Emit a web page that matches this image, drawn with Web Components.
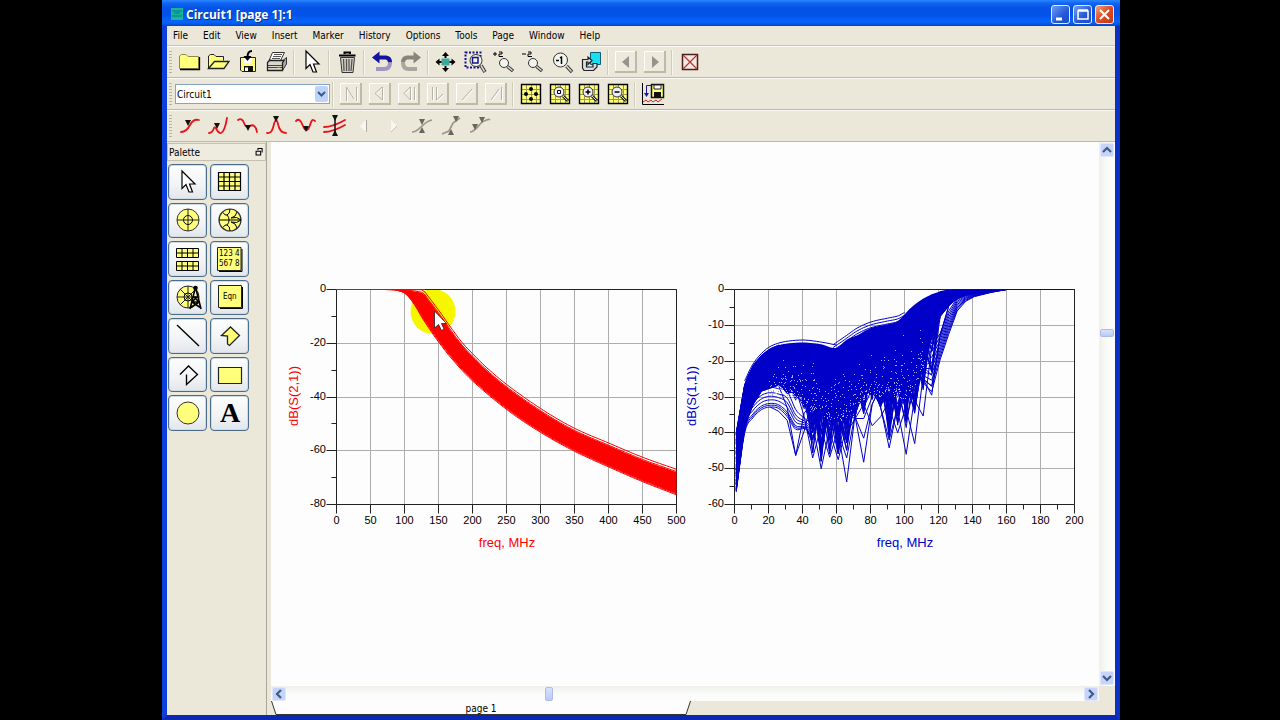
<!DOCTYPE html>
<html lang="en">
<head>
<meta charset="utf-8">
<title>Circuit1 [page 1]:1</title>
<style>
html,body{margin:0;height:100%;background:#000}
body{font:10px "DejaVu Sans Condensed","DejaVu Sans",sans-serif;color:#000}
</style>
</head>
<body>
<app-window></app-window>
<script>
const define = (name, html, setup) => {
  const t = document.createElement('template');
  t.innerHTML = html;
  customElements.define(name, class extends HTMLElement {
    connectedCallback() {
      if (this.shadowRoot) return;
      this.attachShadow({mode: 'open'}).append(t.content.cloneNode(true));
      if (setup) setup.call(this, this.shadowRoot);
    }
  });
};

/* ---------- icons: 24 x 24 grid ---------- */
const S = 'stroke="#000" fill="none"';
const Y = '#ffff7b';
const arrow = '<path d="M6 1V18.5L10 14.5 13 22H16.5L13.5 14H19Z" fill="#fff" stroke="#000" stroke-width="1.2"/>';
const raised = '<path d="M1.500 1.500H22.500V22.500H1.500Z" fill="#ece9dd" stroke="#fff"/><path d="M22 1V22H1" stroke="#bdbaaa" stroke-width="2" fill="none"/>';
const dim = d => `${raised}<path d="${d}" fill="none" stroke="#fff" transform="translate(1 1)"/><path d="${d}" fill="none" stroke="#b7b4a5"/>`;
const grid20 = `<path d="M2.500 2.500H21.500V21.500H2.500Z" fill="${Y}"/><path d="M7.500 2V21M12.500 2V21M17.500 2V21M2 7.500H21M2 12.500H21M2 17.500H21" stroke="#9a9a4a" fill="none"/><path d="M2.500 2.500H21.500V21.500H2.500Z" ${S} stroke-width="1.400"/>`;
const lensSmall = s => `${grid20}<circle cx="11" cy="10" r="5" fill="#eef" stroke="#333"/><path d="M15 14L20 19" stroke="#222" stroke-width="3"/><path d="M15 14L19.500 18.500" stroke="#ddd"/>${s}`;
const lens = (x, y, r, e) => `<path d="M${x + r - 1} ${y + r - 1}L${e} ${e}" stroke="#333" stroke-width="3.400"/><path d="M${x + r - 1} ${y + r - 1}L${e - .5} ${e - .5}" stroke="#ddd" stroke-width="1.500"/><circle cx="${x}" cy="${y}" r="${r}" fill="#f4f4ef" stroke="#333"/>`;
const red = d => `<path d="${d}" fill="none" stroke="#e8141c" stroke-width="1.800" stroke-linecap="round" stroke-linejoin="round"/>`;
const gray = d => `<path d="${d}" fill="none" stroke="#9a978b" stroke-width="1.700"/>`;
const tri = (x, y, c = '#111') => `<path d="M${x - 3} ${y}H${x + 3}L${x} ${y + 6}Z" fill="${c}"/>`;
const triUp = (x, y, c = '#111') => `<path d="M${x - 3} ${y}H${x + 3}L${x} ${y - 6}Z" fill="${c}"/>`;

const ICONS = {
  folder: `<path d="M1.500 18.500V6L3.500 4.500H8L10 6.500H20.500V18.500Z" fill="${Y}" stroke="#8a8a50"/><path d="M21.500 7V19.500H2" ${S} stroke-width="1.300"/>`,
  open: `<path d="M1.500 18.500V6L3.500 4.500H7L9 6.500H16.500V10.500" fill="${Y}" stroke="#222"/><path d="M1.500 18.500L7.500 11.500H22L17 18.500Z" fill="${Y}" stroke="#222" stroke-width="1.300"/>`,
  save: `<path d="M4.500 7.500H19.500V21.500H6L4.500 20Z" fill="${Y}" stroke="#222"/><path d="M8 8H16V13H8Z" fill="#fff"/><path d="M8 16H17V22H8Z" fill="#111"/><path d="M9 17.500H12V21H9Z" fill="#fff"/><path d="M16 1C12 1 11.500 4 11.500 7" ${S} stroke-width="2"/><path d="M7.500 6H15.500L11.500 11Z" fill="#000"/>`,
  print: `<path d="M7.500 2.500H19.500L15.500 10.500H4Z" fill="#fff" stroke="#333"/><path d="M9 4.500H17M8 6.500H16M7 8.500H15" stroke="#555"/><path d="M2.500 12.500L5.500 9.500M16 10.500H18L21.500 7.500V14L17.500 20.500" fill="#aaa" stroke="#333"/><path d="M2.500 12.500L4.500 10.500H19L17.500 13V20.500H2.500Z" fill="#d8d8cf" stroke="#222" stroke-width="1.300"/><path d="M3 15.500H17M3 17.500H17" stroke="#444"/><path d="M12 17H15" stroke="#cc0"/>`,
  arrow,
  trash: `<path d="M5.500 7.500H19.500L18 22.500H7Z" fill="#d2d0c4" stroke="#333"/><path d="M4 5.500H20.500M9.500 4V2.500H15V4" ${S} stroke-width="2"/><path d="M8.500 9L9 21M11.500 9V21M14 9V21M17 9L16 21" stroke="#555" stroke-width="1.300"/>`,
  undo: `<path d="M8 7.500H16Q20 8 20 12.500" fill="none" stroke="#15159b" stroke-width="4"/><path d="M2 7.500L9.500 1.500V13.500Z" fill="#15159b"/><path d="M20 12.500Q20 19 14 19H6" fill="none" stroke="#9d97c2" stroke-width="4"/>`,
  redo: `<path d="M16 7.500H8Q4 8 4 12.500" fill="none" stroke="#87857c" stroke-width="4"/><path d="M22 7.500L14.500 1.500V13.500Z" fill="#87857c"/><path d="M4 12.500Q4 19 10 19H18" fill="none" stroke="#a9a79d" stroke-width="4"/>`,
  fit: `<path d="M7.500 8.500H15.500V15.500H7.500Z" fill="#3aa99a"/><path d="M11.500 2L15 6H12.500V8H10.500V6H8ZM11.500 22L15 18H12.500V16H10.500V18H8ZM1.500 12L5.500 8.500V11H7.500V13H5.500V15.500ZM21.500 12L17.500 8.500V11H15.500V13H17.500V15.500Z"/>`,
  zoombox: `<path d="M2.500 2.500H17.500V17.500H2.500Z" fill="none" stroke="#11118e" stroke-width="2" stroke-dasharray="2 1.500"/>${lens(13, 10.5, 6, 22)}<path d="M9.500 7.500H15V13H9.500Z" fill="none" stroke="#11118e" stroke-width="1.500"/>`,
  zoomin: `<path d="M1 4H5M3 2V6M7 2H10V4H7V6.500H11" ${S}/>${lens(12, 13, 4.5, 21)}`,
  zoomout: `<path d="M1 4H5M7 2H10V4H7V6.500H11" ${S}/>${lens(12, 13, 4.5, 21)}`,
  zoomone: `${lens(10.5, 10, 7, 22)}<path d="M6 10.500H9M11.500 6.500V14M10 8L12 6.500" ${S} stroke-width="1.500"/>`,
  pushinto: `<path d="M11.500 2.500H21.500V14.500H11.500Z" fill="#19e0ee" stroke="#0b5c78"/><path d="M9 9.500H3.500V18L5 20.500H14.500L18 17V13.500H14V17H7.500V12H9V14.500L13 10.500 9 7Z" fill="#dcdce4" stroke="#222" stroke-width="1.200"/>`,
  prev: `${raised}<path d="M15 6V18L8 12Z" fill="#96948a"/>`,
  next: `${raised}<path d="M9 6V18L16 12Z" fill="#96948a"/>`,
  delete: `<path d="M4.500 4.500H19.500V19.500H4.500Z" fill="#f9eae4" stroke="#4a1d1d" stroke-width="1.500"/><path d="M5 5L19 19M19 5L5 19" stroke="#b6342e" stroke-width="1.200"/>`,
  first: dim('M7.500 5V19M17.500 5V19M7.500 5L15 17'), back: dim('M14.500 5V18L7 11.500 14 5'), backpage: dim('M13.500 5V18L7 11.500 13 5M17.500 5V18'),
  forward: dim('M6.500 5V18M10.500 5V18L17 12'), line: dim('M7 18L17 7'), last: dim('M7 18L15 7M17.500 5V18'),
  gfit: `${grid20}<circle cx="12" cy="7" r="2"/><circle cx="12" cy="17" r="2"/><circle cx="7" cy="12" r="2"/><circle cx="17" cy="12" r="2"/>`,
  gbox: lensSmall('<path d="M9.500 8.500H12.500V11.500H9.500Z" fill="none" stroke="#000"/>'),
  gin: lensSmall('<path d="M8.500 10H13.500M11 7.500V12.500" stroke="#000" stroke-width="1.500"/>'),
  gout: lensSmall('<path d="M8.500 10H13.500" stroke="#000" stroke-width="1.500"/>'),
  dataset: `<path d="M1.500 1V22.500H23" ${S}/><path d="M10.500 2.500H22.500V15.500H10.500Z" fill="${Y}" stroke="#111" stroke-width="1.500"/><path d="M13 3H20V7H13Z" fill="#fff" stroke="#222"/><path d="M13 10H20V15H13Z" fill="#111"/><path d="M10 3.500H5.500V12" stroke="#1919ac" fill="none"/><path d="M3 11H8L5.500 15Z" fill="#1919ac"/><path d="M2 20L5 18 7 20 10 18 12 20 15 18 17 20 21 17" fill="none" stroke="#dc251c"/>`,
  m1: red('M3 18C8 18 10 15 12 11S17 5 21 6') + tri(10, 6),
  m2: red('M2 19C5 19 6 17 7 14 9 11 10 20 14 19 17 18 19 10 20 4') + tri(10, 9),
  m3: red('M2 6C5 4 7 6 8 9S11 14 14 12 20 12 21 18') + tri(12, 11),
  m4: red('M2 19C7 20 8 14 9 10S12 5 13 10 16 19 21 19') + tri(11, 2),
  m5: red('M2 7C5 4 7 7 9 12S14 18 16 11 19 6 21 7') + tri(12, 12),
  m6: red('M1 13C8 13 15 10 22 6M1 18C8 18 15 15 22 11') + '<path d="M12 4V20" stroke="#111" stroke-width="1.500"/>' + tri(12, 1) + triUp(12, 22),
  m7: '<path d="M14 6V18L8 12Z" fill="#f8f7f2"/><path d="M14.500 6V18" stroke="#aaa89b"/>',
  m8: '<path d="M10 6V18L16 12Z" fill="#f8f7f2"/><path d="M10 18L16 12" stroke="#c4c1b3"/>',
  m9: gray('M2 18C10 18 12 8 22 6') + tri(12, 5, '#68665f') + triUp(12, 19, '#68665f'),
  m10: gray('M3 20L10 17 14 9 21 4') + tri(17, 2, '#68665f') + triUp(12, 21, '#68665f'),
  m11: gray('M2 18C8 18 12 8 16 7S20 4 22 6') + tri(7, 10, '#68665f') + tri(14, 3, '#68665f'),
  prect: `<path d="M.5 2.500H22.500V20.500H.5Z" fill="${Y}"/><path d="M.5 2.500H22.500V20.500H.5ZM6 2.500V20.500M11.500 2.500V20.500M17 2.500V20.500M.5 7H22.500M.5 11.500H22.500M.5 16H22.500" ${S} stroke-width="1.200"/>`,
  ppolar: `<circle cx="12" cy="12" r="11" fill="${Y}" stroke="#333"/><circle cx="12" cy="12" r="4.500" ${S}/><path d="M12 1V23M1 12H23" stroke="#222"/>`,
  psmith: `<circle cx="12" cy="12" r="11" fill="${Y}" stroke="#333" stroke-width="1.200"/><path d="M1 12H23M9 7A7 7 0 0 1 9 17M5 4.500Q7 8 9 7M5 19.500Q7 16 9 17M9 7Q12 6 12 1M9 17Q12 18 12 23M13 10Q18 9 19 4M13 14Q18 15 19 20M13 10Q19 8 23 12M13 14Q19 16 23 12" ${S}/>`,
  pstack: `<path d="M0.500 1.500H22.500V10.500H.5ZM.5 14.500H22.500V23.500H.5Z" fill="${Y}"/><path d="M.5 1.500H22.500V10.500H.5ZM.5 14.500H22.500V23.500H.5ZM6 1V10M11.500 1V10M17 1V10M6 14V23M11.500 14V23M17 14V23M0 6H22M0 19H22" ${S}/>`,
  plist: `<path d="M-.5 .5H23V23.500H-.5Z" fill="${Y}" stroke="#222"/><path d="M24 2V24.500H1" ${S}/><text x="1" y="9">123 4</text><text x="1" y="19">567 8</text>`,
  pantenna: `<circle cx="12" cy="12" r="11" fill="${Y}" stroke="#222"/><circle cx="12" cy="12" r="4" ${S}/><path d="M12 1V23M1 12H23M4 4L20 20M4 20L20 4" stroke="#222"/><path d="M19 4L14 24M20 4L25 24M17 11L23 17M22 11L16 17M16 17L25 23M23 17L14 23M17 12H22M16 17H24" ${S} stroke-width="1.600"/><circle cx="19.500" cy="3" r="2.300"/>`,
  peqn: `<path d="M.5 .5H23.500V22.500H.5Z" fill="${Y}" stroke="#222"/><path d="M24.500 2V23.500H2" ${S}/><text x="5" y="14">Eqn</text>`,
  pline: `<path d="M1 1L23 22" ${S} stroke-width="1.400"/>`,
  ppoly: `<path d="M3.500 11.500L12.500 3 21.500 11.500 11.500 21.500 9.500 20V12Z" fill="${Y}" stroke="#222" stroke-width="1.300"/>`,
  ppolyline: `<path d="M4 11.500L12.500 3 21.500 11.500 10.500 21.500V11.500" ${S} stroke-width="1.300"/>`,
  pbox: `<path d="M.5 4.500H23.500V20.500H.5Z" fill="${Y}" stroke="#222" stroke-width="1.200"/>`,
  pcircle: `<circle cx="12" cy="12" r="11" fill="${Y}" stroke="#333"/>`,
  ptext: '<text x="2" y="21" style="font:bold 28px Liberation Serif,serif">A</text>',
  restore: '<path d="M9 3.500H19.500V13M9.500 3V8" fill="none" stroke="#000" stroke-width="2.500"/><path d="M5 10H16V19H5Z" fill="none" stroke="#000" stroke-width="2.500"/>'
};

define('x-icon', `<style>:host{display:block;width:24px;height:24px}
svg{display:block;width:100%;height:100%;overflow:visible}text{font:8px "DejaVu Sans Condensed","DejaVu Sans",sans-serif}</style><svg viewBox="0 0 24 24"></svg>`,
function (r) { r.querySelector('svg').innerHTML = ICONS[this.getAttribute('name')]; });

define('tool-button', `<style>:host{display:flex;width:29px;flex:none}
button{all:unset;display:flex;flex:1;align-items:center;justify-content:center}</style><button type="button"></button>`,
function (r) {
  const b = r.querySelector('button'), name = this.getAttribute('icon');
  b.innerHTML = `<x-icon name="${name}"></x-icon>`;
  b.setAttribute('aria-label', name);
});

define('tool-sep', `<style>:host{display:block;flex:none;width:6px;height:25px;background:linear-gradient(90deg,#0000 2px,#cfccbb 2px,#cfccbb 3px,#f7f6ef 3px,#f7f6ef 4px,#0000 4px)}</style>`);

define('tool-bar', `<style>:host{display:flex;align-items:center;box-sizing:border-box;height:32px;border-top:1px solid #fbfaf5;border-bottom:1px solid #bdbaaa}
i{flex:none;width:3px;height:22px;margin:0 3px 0 2px;background:repeating-linear-gradient(#b8b5a4 0 1px,#0000 1px 3px)}</style><i></i><slot></slot>`);

define('design-select', `<style>:host{display:block;width:155px;flex:none;position:relative}
select{appearance:none;display:block;width:100%;height:20px;box-sizing:border-box;border:1px solid #86a4c8;border-radius:0;background:#fff;color:#000;font:inherit;padding:0 20px 0 1px;margin:0}
svg{position:absolute;right:2px;top:2px;pointer-events:none}</style>
<select aria-label="Design"><option>Circuit1</option></select>
<svg width="13" height="16"><rect width="13" height="16" rx="2" fill="#c1d2f8"/><path d="M3 6L6.500 9.500 10 6" fill="none" stroke="#3b5a8c" stroke-width="2"/></svg>`);

define('title-bar', `<style>:host{display:flex;align-items:center;height:26px;flex:none;box-sizing:border-box;padding:2px 6px 0 8px;background:linear-gradient(#2a86ff,#1266f2 3px,#0452e6 8px,#0453e8 15px,#0665fb 22px,#0450d8 25px,#0340b8)}
h1{font:bold 12px "Open Sans",sans-serif;color:#fff;margin:0 auto 0 2px;text-shadow:1px 1px #0a318c}
button{all:unset;display:block;width:17px;height:17px;border:1px solid #e4ecfc;border-radius:3px;margin-left:3px;background:linear-gradient(135deg,#6f9cf5,#2457d8 60%,#1a4cc8)}
button.close{background:linear-gradient(135deg,#f0a080,#dc4a20 50%,#c23a12)}
svg{display:block}</style>
<svg width="14" height="14"><rect x="1" y="1" width="12" height="12" fill="#17b49b"/><path d="M2 4H12M2 9H12M4 6H10" stroke="#0b7792"/></svg>
<h1>Circuit1 [page 1]:1</h1>
<button aria-label="Minimize"><svg width="17" height="17"><path d="M4 13H10" stroke="#fff" stroke-width="3"/></svg></button>
<button aria-label="Maximize"><svg width="17" height="17"><path d="M4 5H14V13H4ZM4 4H14" fill="none" stroke="#fff" stroke-width="1.500"/></svg></button>
<button class="close" aria-label="Close"><svg width="17" height="17"><path d="M4 4L13 13M13 4L4 13" stroke="#fff" stroke-width="2.200"/></svg></button>`);

define('menu-bar', `<style>:host{display:flex;gap:15px;height:19px;align-items:center;padding-left:6px;border-bottom:1px solid #c8c5b5}
button{all:unset}</style>`, function (r) {
  for (const m of 'File Edit View Insert Marker History Options Tools Page Window Help'.split(' ')) {
    const b = document.createElement('button'); b.textContent = m; r.append(b);
  }
});

define('tool-palette', `<style>:host{display:block;box-sizing:border-box;width:100px;border-right:1px solid #a9a798;padding-top:1px;background:#ebe8d9}
header{display:flex;align-items:center;justify-content:space-between;box-sizing:border-box;height:18px;border:1px solid #c4c1b1;padding:0 1px;background:#eeebdf}
header x-icon{width:10px;height:10px}
div{display:grid;grid-template-columns:39px 39px;grid-auto-rows:1fr;gap:3px;height:267px;padding:3px 0 0 1px}
button{all:unset;box-sizing:border-box;border:1px solid #4a6c88;border-radius:4px;background:linear-gradient(#fdfdfd,#f1f3f4 60%,#e2e6ec);display:flex;align-items:center;justify-content:center;min-height:0;box-shadow:inset 0 0 0 1px #cfdbe6}
</style><header><span>Palette</span><x-icon name="restore"></x-icon></header><div></div>`, function (r) {
  for (const n of 'arrow prect ppolar psmith pstack plist pantenna peqn pline ppoly ppolyline pbox pcircle ptext'.split(' ')) {
    const b = document.createElement('button'); b.setAttribute('aria-label', n.replace(/^p/, ''));
    b.innerHTML = `<x-icon name="${n}"></x-icon>`; r.querySelector('div').append(b);
  }
});

define('scroll-bar', `<style>:host{display:flex;background:linear-gradient(#f0f0eb,#fcfcfa 60%)}
:host([vertical]){flex-direction:column;background:linear-gradient(90deg,#f0f0eb,#fcfcfa 60%)}
button{all:unset;box-sizing:border-box;flex:none;width:14px;height:14px;border-radius:2px;background:#c6d4fa;border:1px solid #dfe7fd;margin:1px;display:block}
svg{display:block}i{display:block;background:linear-gradient(#d8e2fc,#b9caf5);border:1px solid #a9bcec;border-radius:2px;box-sizing:border-box;flex:none;width:8px;height:14px;margin:1px 0}
:host([vertical]) i{width:14px;height:8px;margin:0 1px}:host([vertical]) button{transform:rotate(90deg)}
.s{flex:var(--before) 1 0}.e{flex:var(--after) 1 0}</style>
<button aria-label="Back"><svg width="12" height="12"><path d="M8 2L4 6 8 10" fill="none" stroke="#3f5b86" stroke-width="2.200"/></svg></button><span class="s"></span><i></i><span class="e"></span>
<button aria-label="Forward"><svg width="12" height="12"><path d="M4 2L8 6 4 10" fill="none" stroke="#3f5b86" stroke-width="2.200"/></svg></button>`);

define('page-tabs', `<style>:host{display:flex;background:#ebe8d9}
button{all:unset;position:relative;width:420px;height:14px;text-align:center;line-height:15px}
svg{position:absolute;left:0;top:0;width:100%;height:100%}span{position:relative}</style>
<button><svg viewBox="0 0 420 14" preserveAspectRatio="none"><path d="M.5 0L5 13.500H415L419.500 0" fill="#fdfdfd" stroke="#333"/></svg><span>page 1</span></button>`);

/* ---------- plots ---------- */
let seed = 7;
const rnd = () => (seed = (seed * 16807) % 2147483647) / 2147483647;
const at = (pts, x) => {
  if (x <= pts[0][0]) return pts[0][1];
  for (let i = 1; i < pts.length; i++) if (x <= pts[i][0]) {
    const [a, b] = pts[i - 1], [c, d] = pts[i];
    return b + (d - b) * (x - a) / (c - a);
  }
  return pts[pts.length - 1][1];
};
/* cubic spline through the points, six samples to a span */
const smooth = pts => {
  const out = [];
  for (let i = 0; i < pts.length - 1; i++) {
    const p0 = pts[i - 1] || pts[i], p1 = pts[i], p2 = pts[i + 1], p3 = pts[i + 2] || p2;
    const m1 = i ? (p2[1] - p0[1]) / (p2[0] - p0[0]) : (p2[1] - p1[1]) / (p2[0] - p1[0]);
    const m2 = p3 !== p2 ? (p3[1] - p1[1]) / (p3[0] - p1[0]) : (p2[1] - p1[1]) / (p2[0] - p1[0]);
    const h = p2[0] - p1[0];
    for (let k = 0; k < 6; k++) {
      const t = k / 6, t2 = t * t, t3 = t2 * t;
      out.push([p1[0] + h * t, Math.min(0, (2*t3-3*t2+1)*p1[1] + (t3-2*t2+t)*h*m1 + (3*t2-2*t3)*p2[1] + (t3-t2)*h*m2)]);
    }
  }
  out.push(pts[pts.length - 1]);
  return out;
};

const S21 = () => {
  const up = smooth([[0,0],[60,0],[126,0],[135,-2.5],[150,-7.5],[167,-13.6],[184,-19.4],[201,-24],[221,-29],[250,-35.2],[299,-44],[348,-51.3],[400,-57],[451,-62.4],[500,-66.8]]);
  const lo = smooth([[0,0],[69,0],[98,-1],[113,-5],[127,-11],[150,-19.5],[172,-26.5],[200,-34],[250,-44.6],[299,-53],[350,-60.2],[400,-66],[451,-71.6],[500,-76.4]]);
  const mix = k => { const o = []; for (let f = 0; f <= 500; f += 5) o.push([f, at(up, f) * (1 - k) + at(lo, f) * k]); return o; };
  return {fills: [[...mix(.12), ...mix(.95).reverse()]], lines: [.01, .96, 1, .1].map(mix), flecks: []};
};

const S11 = () => {
  const up = smooth([[1,-40],[6,-26.5],[10,-22],[14,-19.3],[20,-16.8],[28,-15.3],[40,-14.8],[50,-15.2],[60,-16.3],[66,-14],[72,-12.8],[80,-10.8],[90,-9.7],[96,-8.8],[104,-5],[112,-2.3],[120,-.7],[130,-.1],[145,0],[200,0]]);
  const lo = [[1,-56.5],[6,-38.5],[10,-33],[16,-28.5],[28,-26.5],[38,-28],[44,-31],[50,-33],[60,-34],[66,-33],[72,-29],[80,-27],[90,-27],[100,-28],[106,-25],[110,-20],[113,-17],[116,-11],[122,-7],[128,-3.5],[132,-2.2],[142,-.8],[160,0],[200,0]];
  const low = {31:-29,36:-31,41:-34,46:-46,51:-48,56:-46,61:-46.5,66:-46,71:-36,76:-35,81:-31,86:-33,91:-42,96:-38,101:-39,106:-35,111:-28,116:-24};
  const lines = [], flecks = [];
  /* each trace is swept in 5 MHz steps, with nulls where the reflection cancels */
  for (let n = 0; n < 70; n++) {
    const t = [], k = rnd(), ph = Math.floor(rnd() * 4);
    for (let f = 1; f <= 160; f += 5) {
      let v = at(up, f) * (1 - k) + at(lo, f) * k;
      const m = low[f];
      if (m && (Math.floor(f / 5) + ph) % 4 === 0) v = at(lo, f) + (m - at(lo, f)) * Math.pow(rnd(), .9);
      else if (m) v -= rnd() * 3;
      t.push([f, Math.min(v, at(up, f))]);
    }
    lines.push(t);
  }
  for (const [f, d] of [[36,-46.3],[46,-47],[51,-50],[56,-46.8],[61,-47.5],[66,-53.7],[66,-47],[76,-48.2],[76,-41.5],[91,-44.2],[91,-42],[96,-40],[101,-46],[106,-43],[111,-35.3],[116,-29.5],[116,-27]])
    lines.push([[f - 10, at(lo, f - 10)], [f - 5, Math.max(d, at(lo, f - 5) - 6)], [f, d], [f + 5, at(lo, f + 5) - 5], [f + 10, at(lo, f + 10)]]);
  lines.push([[66,-40],[76,-32],[81,-38],[86,-35.500],[91,-31]], [[61,-34],[71,-36],[76,-36],[81,-30]]);
  for (const q of [0, .5, 1, 2, 3, 4, 5.5])
    lines.push(smooth([[1,-56.5 + q],[6,-40 + q],[11,-35.7 + q],[16,-33.5 + q],[21,-32.8 + q],[26,-33.2 + q],[31,-35.5 + q * 1.3],[36,-39 + q],[42,-39 + q * .5],[46,-43 + q]]));
  lines.push([[21,-32.8],[26,-34],[31,-36.5],[36,-46.3],[41,-39.5],[46,-30]]);
  for (const q of [0, .8, 1.6])
    lines.push(smooth([[58,-15.4 - q],[66,-12.8 - q],[72,-10.8 - q],[80,-9.1 - q],[90,-8 - q],[96,-7.4 - q],[100,-6.4 - q]]));
  lines.push(smooth([[6,-25.5],[10,-21.5],[14,-18.8],[20,-16.2],[28,-14.7],[40,-14.1],[50,-14.6],[60,-15.5]]));
  for (let q = 0; q < 9; q++) {
    const g = q * .9;
    lines.push([[111,-26 + q],[116,-28.5 + q * 1.6],[121,-19.5 + g],[126,-12.5 + g * .9],[131,-6 + g * .5],[136,-3.3 + g * .3],[141,-2 + g * .15],[151,-.8 + g * .05],[160,0]]);
  }
  /* pinholes between crossing traces, denser towards the lower edge */
  for (let n = 0; n < 420; n++) {
    const f = 20 + rnd() * 92, a = at(up, f) - 3, b = at(lo, f) - 3;
    flecks.push([f, a + (b - a) * Math.pow(rnd(), .35)]);
  }
  return {fills: [[...up, ...lo.slice().reverse()]], lines, flecks};
};

define('data-plot', `<style>:host{display:block;flex:none}svg{display:block;overflow:visible}
text{font:11px "Liberation Sans",Arial,sans-serif}.t{font-size:13px;fill:var(--trace)}
.l path,.edge{fill:none;stroke:var(--trace);stroke-width:1}.f path{fill:var(--trace)}</style>
<svg width="398" height="272" viewBox="0 0 398 272"></svg>`, function (r) {
  const a = n => this.getAttribute(n), fmax = +a('fmax'), fstep = +a('fstep'), min = +a('min'), dstep = +a('dstep');
  const L = 51.5, W = 340, T = 9.5, H = 215;
  const X = f => +(L + f / fmax * W).toFixed(1), V = d => +(T + d / min * H).toFixed(1);
  const px = v => Math.floor(v) + .5;
  const path = p => 'M' + p.map(([f, d]) => X(f) + ' ' + V(d)).join('L');
  let grid = '', ticks = '', text = '';
  for (let f = 0; f <= fmax; f += fstep) {
    const x = px(X(f));
    grid += `M${x} ${T}V${T + H}`; ticks += `M${x} ${T + H}v9`;
    if (a('fminor') && f < fmax) ticks += `M${px(X(f + fstep / 2))} ${T + H}v5`;
    text += `<text x="${x}" y="244" text-anchor="middle">${f}</text>`;
  }
  for (let d = 0; d >= min; d -= dstep) {
    const y = px(V(d));
    grid += `M${L} ${y}H${L + W}`; ticks += `M${L - 10} ${y}H${L}`;
    if (d > min) ticks += `M${L - 5} ${px(V(d - dstep / 2))}H${L}`;
    text += `<text x="41" y="${y + 2.5}" text-anchor="end">${d}</text>`;
  }
  const isS21 = a('data') === 'S21';
  const {fills, lines, flecks} = isS21 ? S21() : S11();
  const mark = a('pointer');
  r.querySelector('svg').innerHTML = `
    <path d="${grid}" stroke="#adadad" fill="none"/>
    ${mark ? '<circle cx="148" cy="31.500" r="22.500" fill="#f6f600"/>' : ''}
    <path d="M${L} ${T}H${L + W}V${T + H}H${L}Z${ticks}" stroke="#222" fill="none"/>
    <g class="f">${fills.map(p => `<path d="${path(p)}Z"/>`).join('')}</g>
    <g class="l">${lines.map(p => `<path d="${path(p)}"/>`).join('')}</g>
    <path d="${flecks.map(([f, d]) => `M${px(X(f)) - .5} ${px(V(d))}h1`).join('')}" stroke="#a9a9f2" fill="none"/>
    ${isS21 ? `<path d="M140 ${T}H${L + W}" stroke="#222"/>` : ''}
    <path class="edge" d="M${isS21 ? L : X(130)} ${T}H${isS21 ? 140 : L + W}"/>
    ${text}<text class="t" x="222" y="267" text-anchor="middle">freq, MHz</text>
    <text class="t" transform="translate(13 116)rotate(-90)" text-anchor="middle">${a('label')}</text>
    ${mark ? '<path d="M149.500 31V48L153.500 44.500 156.500 50.500 159 49 156.500 43.500H161.500Z" fill="#fff" stroke="#222" stroke-width=".8"/>' : ''}`;
});

define('app-window', `<style>
:host{display:flex;flex-direction:column;box-sizing:border-box;height:100vh;margin:0 160px 0 162px}
.body{display:flex;flex-direction:column;flex:1;min-height:0;background:#ebe8d9;border:5px solid #0c3fdc;border-top:0;border-right-color:#0a30c4;border-bottom-color:#0a28b4}
.work{display:grid;grid-template-columns:auto 1fr auto;grid-template-rows:1fr 15px 14px;flex:1;min-height:0}
tool-palette{grid-row:1/4;margin-right:4px}
main{display:flex;align-items:center;justify-content:center;background:#fdfdfd;padding:4px 4px 0 0;min-width:0}
scroll-bar[vertical]{width:16px;overflow:hidden}
page-tabs{grid-column:2/4}
.h{--before:259;--after:532}.v{--before:172;--after:334}
</style>
<title-bar></title-bar>
<div class="body">
<menu-bar></menu-bar>
<tool-bar><tool-button icon="folder"></tool-button><tool-button icon="open"></tool-button><tool-button icon="save"></tool-button><tool-button icon="print"></tool-button><tool-sep></tool-sep><tool-button icon="arrow"></tool-button><tool-sep></tool-sep><tool-button icon="trash"></tool-button><tool-sep></tool-sep><tool-button icon="undo"></tool-button><tool-button icon="redo"></tool-button><tool-sep></tool-sep><tool-button icon="fit"></tool-button><tool-button icon="zoombox"></tool-button><tool-button icon="zoomin"></tool-button><tool-button icon="zoomout"></tool-button><tool-button icon="zoomone"></tool-button><tool-button icon="pushinto"></tool-button><tool-sep></tool-sep><tool-button icon="prev"></tool-button><tool-button icon="next"></tool-button><tool-sep></tool-sep><tool-button icon="delete"></tool-button></tool-bar>
<tool-bar><design-select></design-select><tool-sep></tool-sep><tool-button icon="first"></tool-button><tool-button icon="back"></tool-button><tool-button icon="backpage"></tool-button><tool-button icon="forward"></tool-button><tool-button icon="line"></tool-button><tool-button icon="last"></tool-button><tool-sep></tool-sep><tool-button icon="gfit"></tool-button><tool-button icon="gbox"></tool-button><tool-button icon="gin"></tool-button><tool-button icon="gout"></tool-button><tool-sep></tool-sep><tool-button icon="dataset"></tool-button></tool-bar>
<tool-bar><tool-button icon="m1"></tool-button><tool-button icon="m2"></tool-button><tool-button icon="m3"></tool-button><tool-button icon="m4"></tool-button><tool-button icon="m5"></tool-button><tool-button icon="m6"></tool-button><tool-button icon="m7"></tool-button><tool-button icon="m8"></tool-button><tool-button icon="m9"></tool-button><tool-button icon="m10"></tool-button><tool-button icon="m11"></tool-button></tool-bar>
<div class="work">
<tool-palette></tool-palette>
<main>
<data-plot style="--trace:#f00" data="S21" fmax="500" fstep="50" min="-80" dstep="20" label="dB(S(2,1))" pointer="on"></data-plot>
<data-plot style="--trace:#0000c8" data="S11" fmax="200" fstep="20" fminor="on" min="-60" dstep="10" label="dB(S(1,1))"></data-plot>
</main>
<scroll-bar class="v" vertical></scroll-bar>
<scroll-bar class="h"></scroll-bar><span></span>
<page-tabs></page-tabs>
</div>
</div>`);
</script>
</body>
</html>
